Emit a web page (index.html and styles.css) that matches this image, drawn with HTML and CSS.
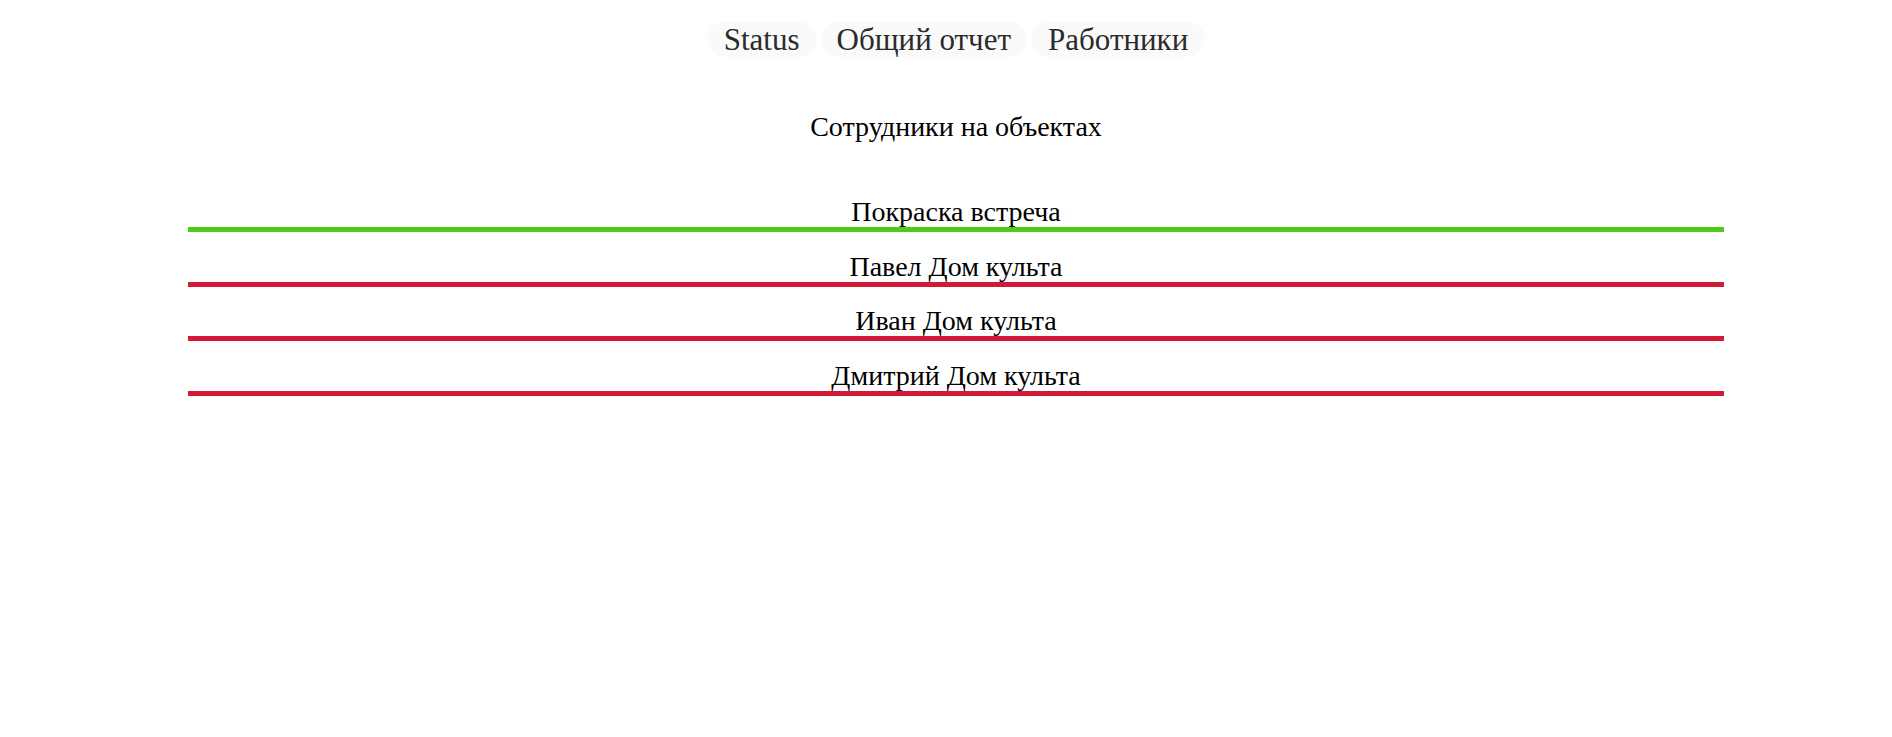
FILE: index.html
```html
<!DOCTYPE html>
<html lang="ru">
<head>
<meta charset="utf-8">
<title>Сотрудники на объектах</title>
<link rel="stylesheet" href="styles.css">
</head>
<body>
<div class="page">
  <nav class="nav">
    <a class="pill" href="#">Status</a>
    <a class="pill" href="#">Общий отчет</a>
    <a class="pill" href="#">Работники</a>
  </nav>
  <h2 class="title">Сотрудники на объектах</h2>
  <div class="list">
    <div class="row ok">Покраска встреча</div>
    <div class="row bad">Павел Дом культа</div>
    <div class="row bad">Иван Дом культа</div>
    <div class="row bad">Дмитрий Дом культа</div>
  </div>
</div>
</body>
</html>
```
FILE: styles.css
```css
body {
  margin: 8px;
  background: #ffffff;
  font-family: "Liberation Serif", "Times New Roman", serif;
  color: #000;
}
.page {
  margin-left: 180px;
  width: 1536px;
}
.nav {
  display: flex;
  justify-content: center;
  gap: 3px;
  margin-top: 14px;
}
.pill {
  font-size: 31px;
  line-height: 35px;
  padding: 0 17px;
  border-radius: 18px;
  background: #fafafa;
  color: #2b2b2b;
  text-decoration: none;
}
.title {
  font-size: 28px;
  font-weight: normal;
  text-align: center;
  margin: 54px 0 0;
}
.list {
  margin-top: 54px;
}
.row {
  font-size: 28px;
  text-align: center;
  line-height: 30px;
  border-bottom: 5px solid;
  margin-bottom: 19.5px;
}
.row.ok { border-color: #4ccc17; }
.row.bad { border-color: #d21a38; }
```
